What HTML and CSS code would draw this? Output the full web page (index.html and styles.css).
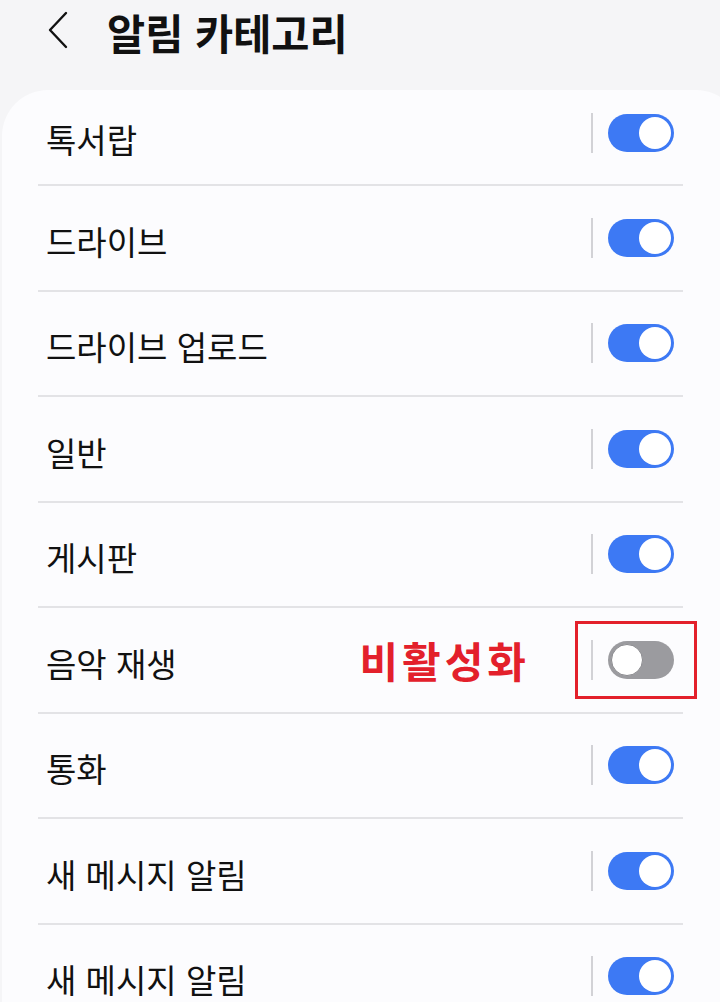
FILE: index.html
```html
<!DOCTYPE html>
<html lang="ko">
<head>
<meta charset="utf-8">
<link rel="stylesheet" href="styles.css">
</head>
<body>
<header class="header">
  <svg class="back" width="24" height="38" viewBox="0 0 24 38"><path d="M20 2 L4 19 L20 36" fill="none" stroke="#111" stroke-width="2.4" stroke-linecap="round" stroke-linejoin="round"/></svg>
  <h1 class="title">알림 카테고리</h1>
</header>
<main class="card">
  <div class="row first"><span class="label">톡서랍</span><span class="divider"></span><span class="toggle on"><span class="knob"></span></span></div>
  <div class="row"><span class="label">드라이브</span><span class="divider"></span><span class="toggle on"><span class="knob"></span></span></div>
  <div class="row"><span class="label">드라이브 업로드</span><span class="divider"></span><span class="toggle on"><span class="knob"></span></span></div>
  <div class="row"><span class="label">일반</span><span class="divider"></span><span class="toggle on"><span class="knob"></span></span></div>
  <div class="row"><span class="label">게시판</span><span class="divider"></span><span class="toggle on"><span class="knob"></span></span></div>
  <div class="row annotated"><span class="label">음악 재생</span><span class="note">비활성화</span><span class="divider"></span><span class="toggle off"><span class="knob"></span></span><span class="redbox"></span></div>
  <div class="row"><span class="label">통화</span><span class="divider"></span><span class="toggle on"><span class="knob"></span></span></div>
  <div class="row"><span class="label">새 메시지 알림</span><span class="divider"></span><span class="toggle on"><span class="knob"></span></span></div>
  <div class="row"><span class="label">새 메시지 알림</span><span class="divider"></span><span class="toggle on"><span class="knob"></span></span></div>
</main>
</body>
</html>
```
FILE: styles.css
```css
html, body {
  margin: 0;
  padding: 0;
}
body {
  background: #f5f5f7;
  font-family: "Noto Sans CJK KR", "Noto Sans", sans-serif;
  color: #111;
  width: 720px;
  height: 1002px;
  overflow: hidden;
}
.header {
  height: 90px;
  display: flex;
  align-items: flex-start;
  padding-left: 46px;
  box-sizing: border-box;
}
.back {
  margin-top: 11px;
  flex: none;
}
.title {
  margin: 0 0 0 37px;
  font-size: 41.5px;
  font-weight: 700;
  line-height: 64px;
  letter-spacing: 0;
}
.card {
  background: #fcfcfe;
  margin-left: 2px;
  width: 740px;
  border-radius: 46px 46px 0 0;
  padding-top: 0;
}
.row {
  position: relative;
  display: flex;
  align-items: center;
  height: 105.5px;
  box-sizing: border-box;
  margin-left: 36px;
  width: 645px;
  padding: 0 9px 0 8px;
  border-bottom: 2px solid #e3e3e6;
}
.row.first {
  height: 96px;
  padding-bottom: 8px;
}
.label {
  flex: 1;
  font-size: 33px;
  line-height: 40px;
  padding-top: 6px;
}
.row.first .label {
  padding-top: 12px;
}
.divider {
  width: 2px;
  height: 40px;
  background: #d2d2d6;
  margin-right: 15px;
}
.toggle {
  width: 66px;
  height: 38px;
  border-radius: 19px;
  box-sizing: border-box;
  padding: 3px;
  display: flex;
  align-items: center;
}
.toggle.on {
  background: #3d79f4;
  justify-content: flex-end;
}
.toggle.off {
  background: #9b9b9f;
  justify-content: flex-start;
}
.knob {
  width: 32px;
  height: 32px;
  border-radius: 50%;
  background: #ffffff;
}
.toggle.off .knob {
  box-sizing: border-box;
  border: 1.5px solid #8a8a8e;
}
.note {
  font-size: 42px;
  font-weight: 700;
  color: #e3202b;
  line-height: 48px;
  letter-spacing: 4px;
  margin-right: 61px;
}
.redbox {
  position: absolute;
  left: 537px;
  top: 13px;
  width: 122px;
  height: 78px;
  box-sizing: border-box;
  border: 3px solid #e3202b;
}
```
